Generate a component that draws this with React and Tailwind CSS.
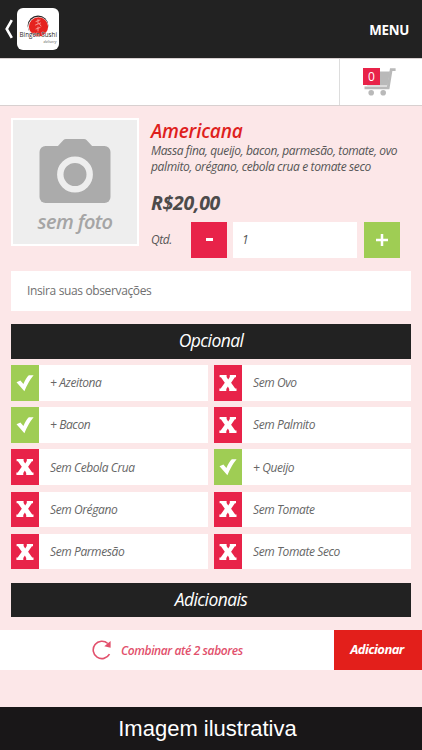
import React, { useState } from "react";

const opcionais = [
  { nome: "+ Azeitona", ativo: true },
  { nome: "Sem Ovo", ativo: false },
  { nome: "+ Bacon", ativo: true },
  { nome: "Sem Palmito", ativo: false },
  { nome: "Sem Cebola Crua", ativo: false },
  { nome: "+ Queijo", ativo: true },
  { nome: "Sem Orégano", ativo: false },
  { nome: "Sem Tomate", ativo: false },
  { nome: "Sem Parmesão", ativo: false },
  { nome: "Sem Tomate Seco", ativo: false },
];

const Logo = () => (
  <svg viewBox="0 0 42 42" className="w-[42px] h-[42px]">
    <rect width="42" height="42" rx="6" fill="#fff" />
    <circle cx="21" cy="17.8" r="10.4" fill="#2a2223" />
    <circle cx="21.3" cy="19" r="10.3" fill="#fff" />
    <circle cx="21.5" cy="18.8" r="9.6" fill="#e5231f" />
    <path
      d="M19 13.5l4-1.5M21 11.5v4M18.5 17l5-2M22 15.5l2 2.5M19 21l4-1.5M21 19v4"
      fill="none"
      stroke="#f7a09c"
      strokeWidth="0.9"
      strokeLinecap="round"
    />
    <text x="2.6" y="29.3" fontSize="6.4" fontWeight="500" fill="#2c2526" stroke="#fff" strokeWidth="0.4" paintOrder="stroke" textLength="37.4" lengthAdjust="spacingAndGlyphs">
      Bingen Sushi
    </text>
    <text x="26.5" y="34.8" fontSize="3.8" fontStyle="italic" fill="#555" textLength="13" lengthAdjust="spacingAndGlyphs">
      delivery
    </text>
  </svg>
);

const Header = () => (
  <header className="h-[58px] shrink-0 bg-[#222222] flex items-center justify-between pl-[5px] pr-[13px]">
    <button className="flex items-center gap-[4px]">
      <svg viewBox="0 0 8 20" className="w-[8px] h-[20px]">
        <path d="M6.8 1.2L1.7 10l5.1 8.8" fill="none" stroke="#fff" strokeWidth="2.6" />
      </svg>
      <Logo />
    </button>
    <span className="text-white font-bold text-[13.3px] tracking-[-0.3px] mt-[3px]">MENU</span>
  </header>
);

const Carrinho = () => (
  <div className="h-[48px] shrink-0 bg-white border-y border-[#d8d0d0] flex justify-end">
    <div className="w-[83px] border-l border-[#dddddd] pl-[23px] pt-[8px]">
      <div className="relative w-[34px] h-[30px]">
        <svg viewBox="0 0 34 30" className="w-[34px] h-[30px]">
          <path d="M1.5 20.8H25.2L28.2 2.6H32.6" fill="none" stroke="#b9b9b9" strokeWidth="2.8" />
          <path d="M15 4.5h12L24.6 18.6H4z" fill="#b9b9b9" />
          <circle cx="8.2" cy="25.8" r="2.8" fill="#b9b9b9" />
          <circle cx="20.2" cy="25.8" r="2.8" fill="#b9b9b9" />
        </svg>
        <span className="absolute left-0 top-[1px] w-[17px] h-[17px] bg-[#e82349] text-white text-[12px] leading-[17px] text-center">
          0
        </span>
      </div>
    </div>
  </div>
);

const SemFoto = () => (
  <div className="w-[128px] h-[128px] shrink-0 bg-[#eeeeee] border-2 border-white flex flex-col items-center">
    <svg viewBox="0 0 72 64" className="w-[72px] h-[64px] mt-[19px]">
      <rect x="0.5" y="7" width="71" height="57" rx="6" fill="#ababab" />
      <path d="M18 8 L24.5 1 Q25.4 0 27 0 H45 Q46.6 0 47.5 1 L54 8 Z" fill="#ababab" />
      <circle cx="36" cy="35.5" r="14.7" fill="#ababab" stroke="#eeeeee" strokeWidth="6.4" />
    </svg>
    <span className="text-[#a5a5a5] italic font-semibold text-[20px] tracking-[-0.6px] leading-[26px] mt-[6px]">
      sem foto
    </span>
  </div>
);

const Produto = ({ quantidade, setQuantidade }) => (
  <section className="flex gap-[12px] h-[141px]">
    <SemFoto />
    <div className="flex-1">
      <h1 className="text-[#df1f1d] italic font-semibold text-[19px] tracking-[-0.2px] leading-[24px] mt-[1px]">
        Americana
      </h1>
      <p className="text-[#555555] italic text-[12px] tracking-[-0.37px] leading-[16px] whitespace-nowrap">
        Massa fina, queijo, bacon, parmesão, tomate, ovo
        <br />
        palmito, orégano, cebola crua e tomate seco
      </p>
      <p className="text-[#4d4b4b] italic font-bold text-[19.5px] tracking-[-0.3px] leading-[24px] mt-[16px]">
        R$20,00
      </p>
      <div className="flex items-center h-[36px] mt-[7px]">
        <span className="w-[40px] text-[#555555] italic text-[12px] tracking-[-0.4px]">Qtd.</span>
        <button
          className="w-[36px] h-[36px] bg-[#e82349] flex items-center justify-center"
          onClick={() => setQuantidade(Math.max(1, quantidade - 1))}
        >
          <span className="w-[7px] h-[3px] mt-[-1px] bg-white"></span>
        </button>
        <span className="w-[124px] h-[36px] bg-white ml-[6px] mr-[7px] pl-[9px] text-[#555555] italic text-[12px] leading-[36px]">
          {quantidade}
        </span>
        <button
          className="w-[36px] h-[36px] bg-[#9fcd54] flex items-center justify-center"
          onClick={() => setQuantidade(quantidade + 1)}
        >
          <svg viewBox="0 0 12 12" className="w-[12px] h-[12px]">
            <path d="M6 0v12M0 6h12" stroke="#fff" strokeWidth="2.5" />
          </svg>
        </button>
      </div>
    </div>
  </section>
);

const Titulo = ({ children }) => (
  <h2 className="h-[34.5px] bg-[#222222] text-white italic text-[17.5px] tracking-[-0.6px] leading-[32px] text-center">
    {children}
  </h2>
);

const Opcao = ({ nome, ativo, onClick }) => (
  <button className="flex items-center bg-white h-[35.6px] text-left" onClick={onClick}>
    {ativo ? (
      <span className="w-[28px] h-full bg-[#9fcd54] flex items-center justify-center">
        <svg viewBox="0 0 18 18" className="w-[18px] h-[18px]">
          <path d="M.5 8.2L4.4 6.6L7.4 10.1Q10 3.5 12.8 1.2H17.6Q12.3 7.5 8.4 17.2Z" fill="#fff" />
        </svg>
      </span>
    ) : (
      <span className="w-[28px] h-full bg-[#e82349] flex items-center justify-center">
        <svg viewBox="0 0 18 18" className="w-[18px] h-[18px]">
          <path
            d="M.6 1H7.6V3L9.2 5.4L10.8 3V1H17V3.3H15.9L12.1 8.7L16.2 14.5H17.5V17H10.2V15L8.9 12.6L7.3 15V17H.4V14.5H1.7L5.8 8.7L1.9 3.3H.6Z"
            fill="#fff"
          />
        </svg>
      </span>
    )}
    <span className="pl-[11px] pt-[1px] text-[#666666] italic text-[12px] tracking-[-0.4px] leading-[16px]">
      {nome}
    </span>
  </button>
);

const BarraAdicionar = () => (
  <div className="h-[40px] mt-[13px] shrink-0 bg-white flex">
    <button className="flex-1 flex items-center gap-[9px] pl-[92px]">
      <svg viewBox="0 0 20 20" className="w-[20px] h-[20px]">
        <path d="M17.5 14.2A8.7 8.7 0 1 1 15.8 3.5" fill="none" stroke="#e2506c" strokeWidth="1.6" />
        <path d="M18.6 1v6.8l-6.3-1.5z" fill="#e2506c" />
      </svg>
      <span className="pt-[1px] text-[#e2506c] italic font-semibold text-[12px] tracking-[-0.41px]">
        Combinar até 2 sabores
      </span>
    </button>
    <button className="w-[88px] pr-[2px] bg-[#e31f1b] text-white italic font-bold text-[13px] tracking-[-0.55px]">
      Adicionar
    </button>
  </div>
);

const App = () => {
  const [quantidade, setQuantidade] = useState(1);
  const [itens, setItens] = useState(opcionais);

  const alternar = (index) => {
    setItens(itens.map((item, i) => (i === index ? { ...item, ativo: !item.ativo } : item)));
  };

  return (
    <div className="w-[422px] h-[750px] bg-[#fce7e8] flex flex-col overflow-hidden font-['Open_Sans',sans-serif]">
      <Header />
      <Carrinho />
      <main className="px-[11px] pt-[12px]">
        <Produto quantidade={quantidade} setQuantidade={setQuantidade} />
        <input
          className="block w-full h-[40px] mt-[12px] mb-[13px] bg-white pl-[16px] pb-[2px] text-[12px] tracking-[-0.36px] placeholder:text-[#707070] placeholder:opacity-100"
          placeholder="Insira suas observações"
        />
        <Titulo>Opcional</Titulo>
        <div className="grid grid-cols-2 gap-x-[6px] gap-y-[6.6px] mt-[6.5px] mb-[13.4px]">
          {itens.map((item, index) => (
            <Opcao key={item.nome} {...item} onClick={() => alternar(index)} />
          ))}
        </div>
        <Titulo>Adicionais</Titulo>
      </main>
      <BarraAdicionar />
      <footer className="mt-auto h-[43px] pr-[7px] bg-[#191718] text-white text-[22px] leading-[44px] text-center font-['Liberation_Sans',sans-serif]">
        Imagem ilustrativa
      </footer>
    </div>
  );
};

export default App;
